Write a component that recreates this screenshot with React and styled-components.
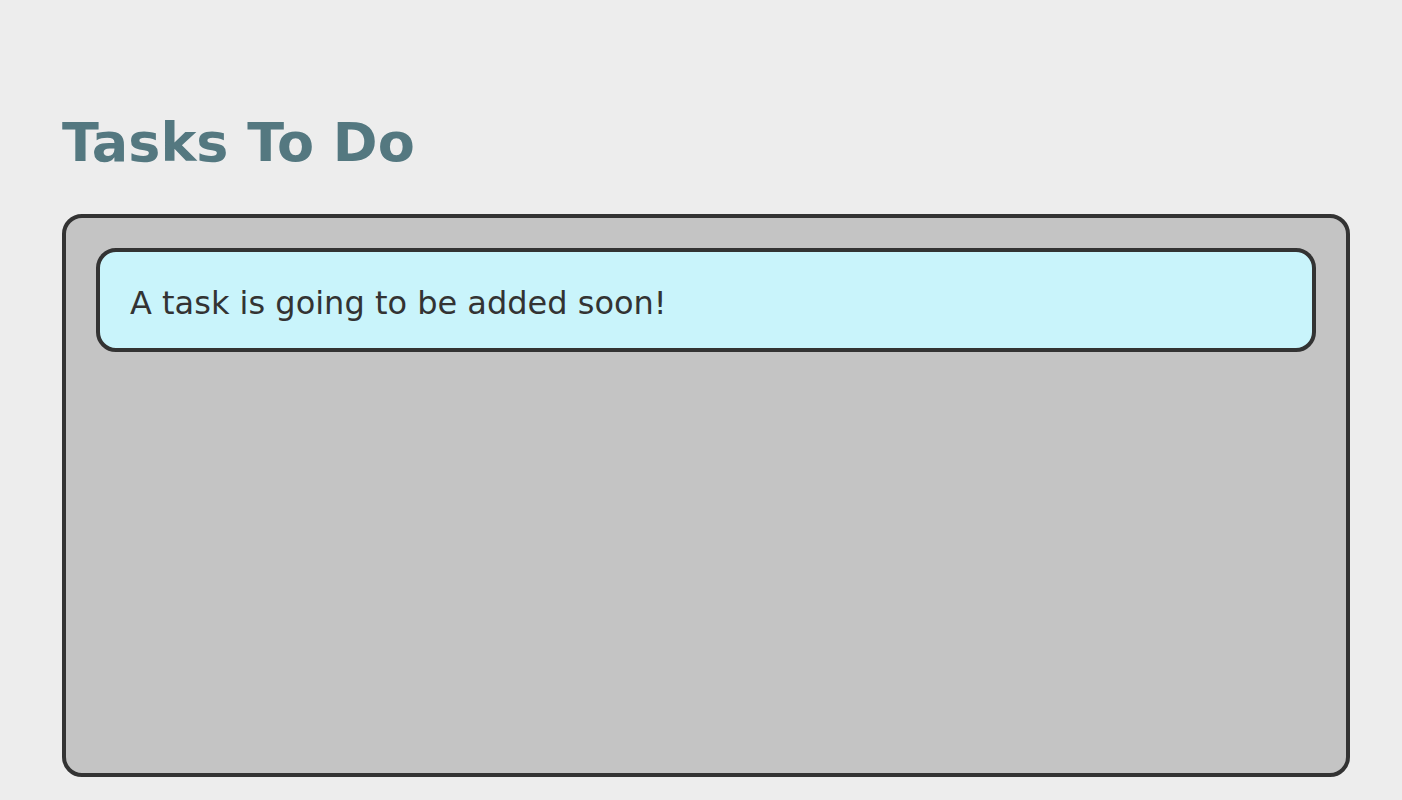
import React from "react";
import styled, { createGlobalStyle } from "styled-components";

const GlobalStyle = createGlobalStyle`
    body {
        margin: 0;
        background-color: #ededed;
        font-family: "DejaVu Sans", Verdana, sans-serif;
    }
`;

const App = () => {
    const tasks = [];

    return (
        <>
            <GlobalStyle />
            <Page>
                <Title>Tasks To Do</Title>
                <TaskBoard>
                    {tasks.length === 0 && (
                        <TaskCard>A task is going to be added soon!</TaskCard>
                    )}
                </TaskBoard>
            </Page>
        </>
    );
};

export default App;

const Page = styled.div`
    padding: 111px 52px 0 62px;
`;

const Title = styled.h1`
    margin: 0 0 38px 0;
    font-size: 54px;
    font-weight: bold;
    color: #547880;
    line-height: 1.2;
`;

const TaskBoard = styled.div`
    box-sizing: border-box;
    height: 563px;
    padding: 30px;
    background-color: #c4c4c4;
    border: 4px solid #333;
    border-radius: 20px;
`;

const TaskCard = styled.div`
    box-sizing: border-box;
    height: 104px;
    padding: 6px 30px 0;
    display: flex;
    align-items: center;
    background-color: #c9f4fb;
    border: 4px solid #333;
    border-radius: 20px;
    font-size: 32px;
    color: #333;
`;
